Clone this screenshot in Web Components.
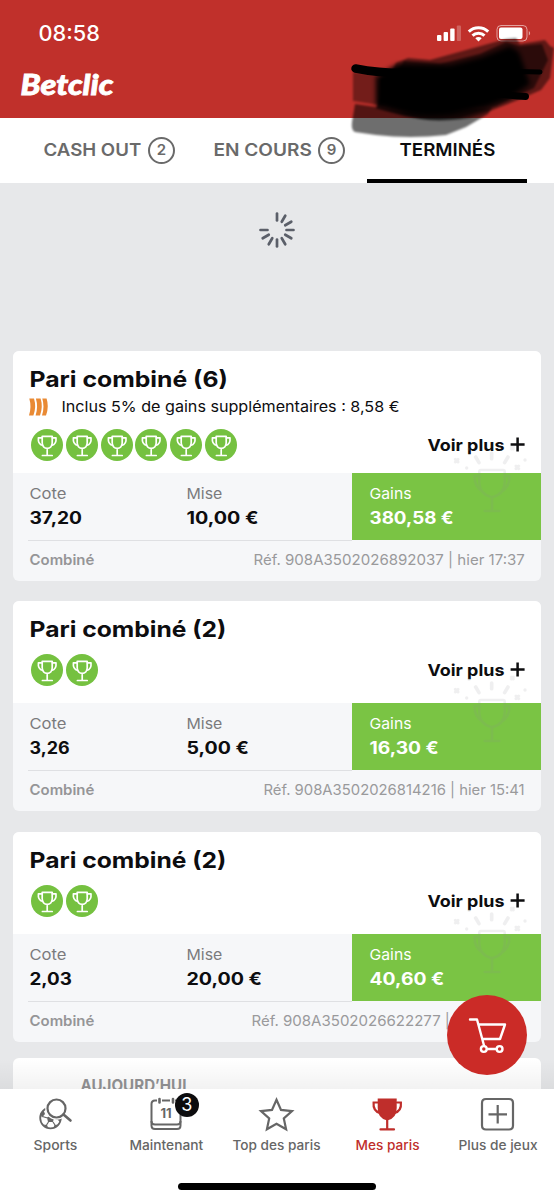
<!DOCTYPE html>
<html lang="fr">
<head>
    <meta charset="UTF-8">
    <title>Betclic - Mes paris</title>
    <style>
        body {
            margin: 0;
            width: 554px;
            height: 1200px;
            overflow: hidden;
            font-family: Inter, "Liberation Sans", sans-serif;
            background: #e7e8ea;
        }
    </style>
</head>
<body>
    <bet-app></bet-app>

    <script>
        // Single line of text stretched to a given width
        class FitText extends HTMLElement {
            constructor() {
                super();
                this.attachShadow({mode: 'open'}).innerHTML = `
                    <style>
                        :host { display: block; flex: none; white-space: nowrap; }
                        span { display: inline-block; transform-origin: 0 50%; }
                    </style>
                    <span><slot></slot></span>
                `;
            }

            connectedCallback() {
                const width = parseFloat(this.getAttribute('w'));
                const span = this.shadowRoot.querySelector('span');
                this.style.width = width + 'px';
                span.style.transform = `translateX(.5px) scaleX(${(width - 1) / span.offsetWidth})`;
            }
        }

        class StatusBar extends HTMLElement {
            constructor() {
                super();
                this.attachShadow({mode: 'open'}).innerHTML = `
                    <style>
                        :host {
                            display: flex; justify-content: space-between; align-items: center;
                            height: 67px; padding: 0 22px 0 38px; color: #fff; box-sizing: border-box;
                        }
                        fit-text { font-size: 21px; font-weight: 500; line-height: 26px; }
                        svg { display: block; margin-top: -1px; }
                    </style>
                    <fit-text w="62">08:58</fit-text>
                    <svg width="96" height="20" viewBox="0 0 96 20" fill="#fff">
                        <rect x="1" y="12" width="4.4" height="6" rx="1"/>
                        <rect x="7.6" y="9" width="4.4" height="9" rx="1"/>
                        <rect x="14.2" y="5.5" width="4.4" height="12.5" rx="1"/>
                        <rect x="20.8" y="2.5" width="4.2" height="15.5" rx="1" opacity=".25"/>
                        <g fill="none" stroke="#fff" stroke-width="3">
                            <path d="M32.8 8.6a14 14 0 0 1 19.4 0"/>
                            <path d="M36.5 12.6a8.7 8.7 0 0 1 12 0"/>
                        </g>
                        <path d="M42.5 18.6l-3.2-3.3a4.6 4.6 0 0 1 6.4 0z"/>
                        <rect x="61" y="2.5" width="30" height="15.5" rx="4" fill="none" stroke="#fff" opacity=".55"/>
                        <rect x="63" y="4.5" width="23.5" height="11.5" rx="2"/>
                        <path d="M92.8 8v4.6c1.8-1 1.8-3.6 0-4.6z" opacity=".55"/>
                    </svg>
                `;
            }
        }

        class BetTab extends HTMLElement {
            constructor() {
                super();
                const count = this.getAttribute('count');
                this.attachShadow({mode: 'open'}).innerHTML = `
                    <style>
                        :host {
                            display: flex; align-items: center; box-sizing: border-box; height: 65px;
                            gap: 6px; color: #6a6a6a; font-size: 17.5px; font-weight: 600; line-height: 24px;
                            border-bottom: 4px solid transparent; padding-top: 4px;
                        }
                        :host([active]) { color: #0c0c0e; border-color: #000; }
                        fit-text { margin-top: -1px; }
                        i {
                            width: 23px; height: 23px; border: 2px solid #6a6a6a; border-radius: 50%;
                            font-style: normal; font-size: 15px; line-height: 22px; text-align: center;
                        }
                    </style>
                    <fit-text w="${this.getAttribute('w')}"><slot></slot></fit-text>
                    ${count ? `<i>${count}</i>` : ''}
                `;
            }
        }

        class TrophyMedal extends HTMLElement {
            constructor() {
                super();
                this.attachShadow({mode: 'open'}).innerHTML = `
                    <style>
                        :host { display: block; width: 32px; height: 32px; border-radius: 50%; background: #75c140; }
                        svg { display: block; }
                    </style>
                    <svg width="32" height="32" fill="none" stroke="#fff" stroke-width="1.7" stroke-linecap="round" stroke-linejoin="round">
                        <path d="M11.2 7.3h10v6.500c0 3.400-2.200 5.600-5 5.600s-5-2.200-5-5.600zM16.200 19.400v6.600M11.400 26.500h9.800"/>
                        <path d="M11 8.800H7.400c-.4 3.800 1 6.800 4.400 7.600M21.400 8.800H25c.4 3.800-1 6.800-4.400 7.600"/>
                    </svg>
                `;
            }
        }

        class BetCard extends HTMLElement {
            constructor() {
                super();
                const [title, legs, titleW] = this.getAttribute('head').split('|');
                const [odds, oddsW] = this.getAttribute('odds').split('|');
                const [stake, stakeW] = this.getAttribute('stake').split('|');
                const [gain, gainW] = this.getAttribute('gain').split('|');
                const refW = this.getAttribute('ref-width');
                const bonus = this.getAttribute('bonus');
                this.attachShadow({mode: 'open'}).innerHTML = `
                    <style>
                        :host {
                            display: block; margin: 20px 13px 0 13px; border-radius: 6px;
                            background: #f6f7f9; color: #0d0d0f;
                        }
                        .head {
                            height: 102px; box-sizing: border-box; padding: 14px 16px 0 16px;
                            background: #fff; border-radius: 6px 6px 0 0;
                        }
                        .head.tall { height: 122px; }
                        h2 { margin: 0; font-size: 22px; font-weight: 700; line-height: 28px; }
                        .bonus {
                            display: flex; gap: 13px; align-items: center; height: 21px; margin-top: 3px;
                            font-size: 15px; line-height: 21px;
                        }
                        .row { display: flex; justify-content: space-between; align-items: center; height: 32px; margin-top: 10.500px; }
                        .tall .row { margin-top: 11.500px; }
                        .medals { display: flex; gap: 2.8px; padding-left: 2px; }
                        .more { display: flex; align-items: center; gap: 5px; font-size: 16.5px; font-weight: 700; line-height: 22px; }
                        .stats { display: grid; grid-template-columns: 157px 182.4px 1fr; height: 67px; position: relative; }
                        .cell { padding: 11px 0 0 16px; border-bottom: 1px solid #dfe0e3; box-sizing: border-box; height: 68px; }
                        .cell:first-child { border-image: linear-gradient(90deg, transparent 16px, #dfe0e3 16px) 1; }
                        .label { font-size: 15px; line-height: 20px; color: #7b7b7d; }
                        .value { font-size: 17px; font-weight: 750; line-height: 28px; }
                        .gain { background: #7ac444; color: #fff; border: 0; height: 67px; padding-left: 17px; position: relative; }
                        .gain .label { color: #fff; }
                        .gain svg { position: absolute; left: 87.5px; top: -43px; }
                        .foot {
                            display: flex; justify-content: space-between; height: 41px; padding: 0 16px;
                            font-size: 14.5px; line-height: 40px; color: #9a9a9c;
                        }
                        .foot b { font-weight: 600; color: #959597; }
                    </style>
                    <div class="head ${bonus ? 'tall' : ''}">
                        <h2><fit-text w="${titleW}">${title}</fit-text></h2>
                        ${bonus ? `
                        <div class="bonus">
                            <svg width="19" height="18" fill="#e98a34">
                                <path id="c" d="M.3 .6h4.700q2.600 8.400-.6 16.800H0q2.800-8.400 .3-16.800z"/>
                                <path d="M6.900 .6h4.700q2.600 8.400-.6 16.800H6.600q2.800-8.400 .3-16.800z"/>
                                <path d="M13.300 .6h4.300q2.600 8.400-.6 16.800h-4q2.800-8.400 .3-16.800z"/>
                            </svg>
                            <fit-text w="338.5">${bonus}</fit-text>
                        </div>` : ''}
                        <div class="row">
                            <div class="medals">${'<trophy-medal></trophy-medal>'.repeat(legs)}</div>
                            <div class="more">
                                <fit-text w="78">Voir plus</fit-text>
                                <svg width="15" height="15" stroke="#0d0d0f" stroke-width="2.500"><path d="M.6 7.500h14M7.600 .500v14"/></svg>
                            </div>
                        </div>
                    </div>
                    <div class="stats">
                        <div class="cell">
                            <fit-text class="label" w="37.5">Cote</fit-text>
                            <fit-text class="value" w="${oddsW}">${odds}</fit-text>
                        </div>
                        <div class="cell">
                            <fit-text class="label" w="37">Mise</fit-text>
                            <fit-text class="value" w="${stakeW}">${stake}</fit-text>
                        </div>
                        <div class="cell gain">
                            <svg width="110" height="100" viewBox="0 0 330 300" fill="none" stroke="#8d8d92" stroke-width="8" stroke-linecap="round" opacity=".13">
                                <path d="M122 120h68q4 0 4 5v32q0 36-38 45q-38-9-38-45v-32q0-5 4-5zM156 202v40M134 243h44M116 138h-12q-2 30 22 46M196 138h12q2 30-22 46"/>
                                <path stroke-width="11" d="M155 69v17M107 81l10 17M204 81l-10 17"/>
                                <path stroke-width="9" d="M46 88l8 8M54 88l-8 8M228 108l8 8M236 108l-8 8M214 51l6 6M220 51l-6 6"/>
                                <path stroke-width="10" d="M80 114h.1M255 90h.1M87 58h.1"/>
                            </svg>
                            <fit-text class="label" w="43">Gains</fit-text>
                            <fit-text class="value" w="${gainW}">${gain}</fit-text>
                        </div>
                    </div>
                    <div class="foot">
                        <b><fit-text w="66">Combiné</fit-text></b>
                        <fit-text w="${refW}" style="margin-right: ${this.getAttribute('ref-gap') || 0}px"><slot></slot></fit-text>
                    </div>
                `;
            }
        }

        const NAV_ICONS = {
            sports: `
                <circle cx="15.500" cy="24" r="10.300" fill="none" stroke="#666" stroke-width="1.800"/>
                <path fill="#666" d="M12 23.500l3.500-2 3.500 2-1 4.500h-5zM5.500 20l3-4 1.500 4-3 3.500zM8 30.500l4 .5 1.500 3.500zM18 34.500l1.500-3.500 4-.5zM22 25l4-1-1 4z"/>
                <path stroke="#666" stroke-width="1.200" d="M12.500 24l-5-1.500M18.500 24l4 1.500M13.500 28l-2 3M18 28l2 3"/>
                <circle cx="21.500" cy="14.500" r="11.300" fill="#fff"/>
                <circle cx="21.500" cy="14.500" r="9" fill="#fff" stroke="#666" stroke-width="2.200"/>
                <path stroke="#666" stroke-width="2.600" stroke-linecap="round" d="M28.500 20.500l7 6"/>`,
            calendar: `
                <g fill="none" stroke="#666" stroke-width="2">
                    <path d="M11 6.500H9q-3.500 0-3.500 3.500v21.500q0 3.500 3.500 3.500h22q3.500 0 3.500-3.500V10q0-3.500-3.500-3.500h-2M16 6.500h8"/>
                    <path d="M5.500 27q0 3.500 3.500 3.500h22q3.500 0 3.500-3.500"/>
                    <path stroke-width="2.600" stroke-linecap="round" d="M13.500 5v3.500M27 5v3.500"/>
                </g>
                <text x="20" y="24" text-anchor="middle" font-size="13" font-weight="700" fill="#666">11</text>`,
            star: `<path fill="none" stroke="#666" stroke-width="2.200" d="M19.500 5.800l4.500 10.100 11 1.200-8.200 7.400 2.300 10.800L19.500 29.800l-9.600 5.500 2.300-10.800-8.200-7.400 11-1.200z"/>`,
            trophy: `
                <path fill="#bf2e2b" d="M10.700 4.500h19v9.500q0 10.500-9.500 12.500-9.500-2-9.500-12.500z"/>
                <path fill="none" stroke="#bf2e2b" stroke-width="2.200" stroke-linecap="round" d="M10.500 8.500H6.600q-.8 8.500 6.500 10.500M30 8.500h3.900q.8 8.500-6.500 10.500M20.200 26v9M13.500 35.400h13.500"/>`,
            plus: `<path fill="none" stroke="#666" stroke-width="2.200" d="M8 5h23q4 0 4 4v22.500q0 4-4 4H8q-4 0-4-4V9q0-4 4-4zM10.500 20.300H29M19.700 11v18.500"/>`
        };

        class NavItem extends HTMLElement {
            constructor() {
                super();
                const badge = this.getAttribute('badge');
                this.attachShadow({mode: 'open'}).innerHTML = `
                    <style>
                        :host {
                            display: flex; flex-direction: column; align-items: center; position: relative;
                            padding-top: 5px; color: #666; font-size: 13px; font-weight: 500; line-height: 20px;
                        }
                        :host([active]) { color: #bf2e2b; }
                        svg { display: block; margin-bottom: .5px; }
                        i {
                            position: absolute; left: 64px; top: 4px; width: 24px; height: 24px; border-radius: 50%;
                            background: #0c0c0e; color: #fff; font-style: normal; font-weight: 400; font-size: 18px;
                            line-height: 24px; text-align: center;
                        }
                    </style>
                    <svg width="40" height="40">${NAV_ICONS[this.getAttribute('icon')]}</svg>
                    ${badge ? `<i>${badge}</i>` : ''}
                    <fit-text w="${this.getAttribute('w')}"><slot></slot></fit-text>
                `;
            }
        }

        class BetApp extends HTMLElement {
            constructor() {
                super();
                this.attachShadow({mode: 'open'}).innerHTML = `
                    <style>
                        :host { display: flex; flex-direction: column; height: 1200px; position: relative; overflow: hidden; }
                        header { height: 118px; background: #c0302b; flex: none; }
                        .logo {
                            margin: 0 0 0 20px; font: italic 900 29px/33px Lato, sans-serif; color: #fff;
                            -webkit-text-stroke: .8px #fff;
                        }
                        .tabs { display: flex; height: 65px; background: #fff; flex: none; }
                        .tabs bet-tab:nth-child(1) { margin-left: 43px; width: 170px; }
                        .tabs bet-tab:nth-child(2) { width: 154px; }
                        .tabs bet-tab:nth-child(3) { width: 160px; box-sizing: border-box; padding-left: 32px; }
                        main { flex: 1; min-height: 0; overflow: hidden; position: relative; }
                        .spinner { display: flex; justify-content: center; height: 121px; padding-top: 27px; }
                        bet-card:nth-of-type(2) { margin-top: 20px; }
                        bet-card:nth-of-type(3) { margin-top: 21px; }
                        .day {
                            margin: 16px 13px 0; height: 60px; padding: 15px 0 0 67px; border-radius: 6px 6px 0 0;
                            background: #fff; color: #939395; font-size: 16px; font-weight: 700; line-height: 24px;
                        }
                        .shade { position: absolute; left: 0; right: 0; bottom: 0; height: 30px; background: linear-gradient(transparent, rgba(0,0,0,.05)); }
                        nav { flex: none; height: 111px; background: #fff; display: grid; grid-template-columns: repeat(5, 110.7px); grid-template-rows: 93.500px 7px; }
                        .home { grid-column: 1 / 6; width: 198px; height: 7px; border-radius: 4px; background: #000; margin-left: 178px; }
                        .fab {
                            position: absolute; left: 447px; top: 995px; width: 80px; height: 80px;
                            border-radius: 50%; background: #cb2b27;
                        }
                        .scribble { position: absolute; left: 0; top: 0; }
                    </style>
                    <header>
                        <status-bar></status-bar>
                        <div class="logo"><fit-text w="94">Betclic</fit-text></div>
                    </header>
                    <div class="tabs">
                        <bet-tab w="99" count="2">CASH OUT</bet-tab>
                        <bet-tab w="99" count="9">EN COURS</bet-tab>
                        <bet-tab w="97" active>TERMINÉS</bet-tab>
                    </div>
                    <main>
                        <div class="spinner">
                            <svg width="40" height="40" viewBox="-20 -20 40 40" stroke="#5b5f69" stroke-width="2.7" stroke-linecap="round">
                                ${[0, 1, 2, 3, 4, 5, 6, 7, 8, 9].map(i => `<path transform="rotate(${i * 30})" d="M0-9.500v-7"/>`).join('')}
                            </svg>
                        </div>
                        <bet-card head="Pari combiné (6)|6|199" bonus="Inclus 5% de gains supplémentaires : 8,58 €"
                            odds="37,20|54" stake="10,00 €|73" gain="380,58 €|85" ref-width="272">Réf. 908A3502026892037 | hier 17:37</bet-card>
                        <bet-card head="Pari combiné (2)|2|198"
                            odds="3,26|41" stake="5,00 €|63" gain="16,30 €|70" ref-width="262">Réf. 908A3502026814216 | hier 15:41</bet-card>
                        <bet-card head="Pari combiné (2)|2|198"
                            odds="2,03|43" stake="20,00 €|76" gain="40,60 €|76" ref-width="199" ref-gap="75">Réf. 908A3502026622277 |</bet-card>
                        <div class="day"><fit-text w="107">AUJOURD’HUI</fit-text></div>
                        <div class="shade"></div>
                    </main>
                    <nav>
                        <nav-item icon="sports" w="45">Sports</nav-item>
                        <nav-item icon="calendar" w="75" badge="3">Maintenant</nav-item>
                        <nav-item icon="star" w="89">Top des paris</nav-item>
                        <nav-item icon="trophy" w="65" active>Mes paris</nav-item>
                        <nav-item icon="plus" w="80">Plus de jeux</nav-item>
                        <div class="home"></div>
                    </nav>
                    <div class="fab">
                        <svg width="80" height="80" fill="none" stroke="#fff" stroke-width="2.400" stroke-linecap="round" stroke-linejoin="round">
                            <path d="M23 24.500h7l7 26M31.500 29.500h26.500l-5 14.500H36M40.500 54h8"/>
                            <circle cx="36.800" cy="54" r="2.900"/>
                            <circle cx="52.600" cy="54" r="2.900"/>
                        </svg>
                    </div>
                    <!-- marker strokes hiding the account balance -->
                    <svg class="scribble" width="554" height="145">
                        <defs>
                            <filter id="soft" x="-10%" y="-20%" width="120%" height="140%"><feGaussianBlur stdDeviation="1"/></filter>
                            <filter id="wide" x="-10%" y="-20%" width="120%" height="140%"><feGaussianBlur stdDeviation="2.800"/></filter>
                        </defs>
                        <g filter="url(#soft)">
                            <path opacity=".57" d="M355 104L376 107 400 112 492 108 488 114 466 127 446 135Q410 139 376 135L355 132Q351 130 352 122z"/>
                            <path opacity=".4" d="M353 72L378 75 384 106 353 101z"/>
                            <path opacity=".5" d="M396 63L408 58 430 60 506 39 516 38 520 44 545 40 550 46 554 48 550 78 541 90 518 100 490 111 470 118Q440 123 420 119L400 114 376 108z"/>
                            <path opacity=".55" d="M404 61L440 64 480 54 506 42 520 46 542 44 548 60 534 88 496 106 460 118Q430 121 405 116L376 108z"/>
                        </g>
                        <path filter="url(#wide)" d="M376 76L398 64 450 65 482 57 510 46 519 52 526 72 530 84 510 98 486 107 450 115Q420 118 400 112L376 105z"/>
                        <g fill="none" stroke="#000" stroke-linecap="round">
                            <path stroke-width="8.500" d="M355.500 68.500Q380 73.500 410 73"/>
                            <path stroke-width="7" d="M492 92Q510 96 525.500 96.500"/>
                            <path stroke-width="5" d="M490 71L540 72"/>
                        </g>
                    </svg>
                `;
            }
        }

        customElements.define('fit-text', FitText);
        customElements.define('status-bar', StatusBar);
        customElements.define('bet-tab', BetTab);
        customElements.define('trophy-medal', TrophyMedal);
        customElements.define('bet-card', BetCard);
        customElements.define('nav-item', NavItem);
        customElements.define('bet-app', BetApp);
    </script>
</body>
</html>
